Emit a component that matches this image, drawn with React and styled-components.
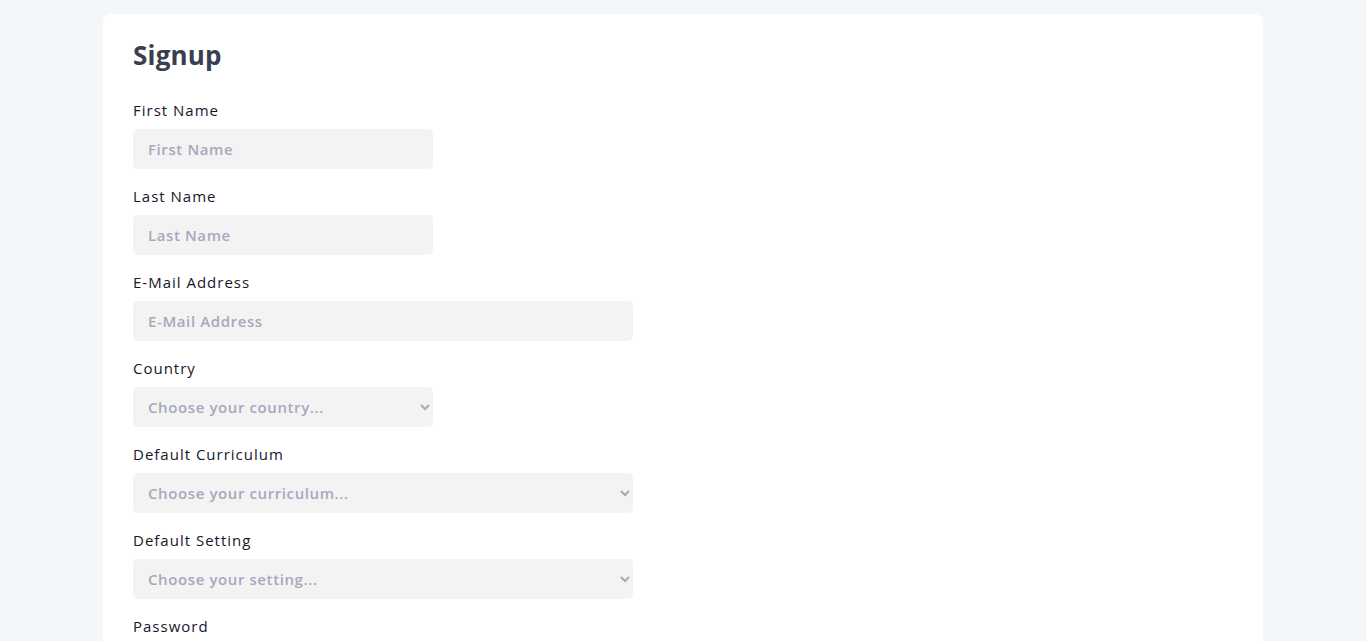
import React from "react";
import styled, { createGlobalStyle } from "styled-components";

const GlobalStyle = createGlobalStyle`
  body {
    margin: 0;
    background: #f4f7fa;
    font-family: "Open Sans", "Liberation Sans", sans-serif;
  }
`;

const Card = styled.div`
  width: 1160px;
  margin: 14px auto 0;
  background: #ffffff;
  border-radius: 8px;
  padding: 24px 30px 30px;
  box-sizing: border-box;
`;

const Title = styled.h3`
  margin: 0 0 27px;
  font-size: 26px;
  line-height: 34px;
  font-weight: 700;
  color: #3a3e4f;
  letter-spacing: 0.2px;
`;

const Field = styled.div`
  display: flex;
  flex-direction: column;
  align-items: flex-start;
  margin-bottom: 16px;
`;

const Label = styled.label`
  font-size: 15px;
  line-height: 22px;
  font-weight: 500;
  color: #17172b;
  margin-bottom: 8px;
  letter-spacing: 1px;
`;

const Input = styled.input`
  width: ${(p) => (p.$wide ? "500px" : "300px")};
  height: 40px;
  box-sizing: border-box;
  border: none;
  border-radius: 5px;
  background: #f3f3f3;
  padding: 0 15px;
  font-family: inherit;
  font-size: 15px;
  font-weight: 600;
  letter-spacing: 0.6px;
  color: #17172b;
  outline: none;

  &::placeholder {
    color: #a6a9bc;
  }
`;

const Select = styled.select`
  width: ${(p) => (p.$wide ? "500px" : "300px")};
  height: 40px;
  box-sizing: border-box;
  border: none;
  border-radius: 5px;
  background: #f3f3f3;
  padding: 0 11px;
  font-family: inherit;
  font-size: 15px;
  font-weight: 600;
  letter-spacing: 0.6px;
  color: #a6a9bc;
  outline: none;
`;

const fields = [
  { label: "First Name", type: "text" },
  { label: "Last Name", type: "text" },
  { label: "E-Mail Address", type: "email", wide: true },
  { label: "Country", select: "Choose your country..." },
  { label: "Default Curriculum", select: "Choose your curriculum...", wide: true },
  { label: "Default Setting", select: "Choose your setting...", wide: true },
  { label: "Password", type: "password", wide: true },
];

const App = () => {
  return (
    <>
      <GlobalStyle />
      <Card>
        <Title>Signup</Title>
        {fields.map((f) => (
          <Field key={f.label}>
            <Label>{f.label}</Label>
            {f.select ? (
              <Select $wide={f.wide} defaultValue="">
                <option value="" disabled>
                  {f.select}
                </option>
              </Select>
            ) : (
              <Input $wide={f.wide} type={f.type} placeholder={f.label} />
            )}
          </Field>
        ))}
      </Card>
    </>
  );
};

export default App;
